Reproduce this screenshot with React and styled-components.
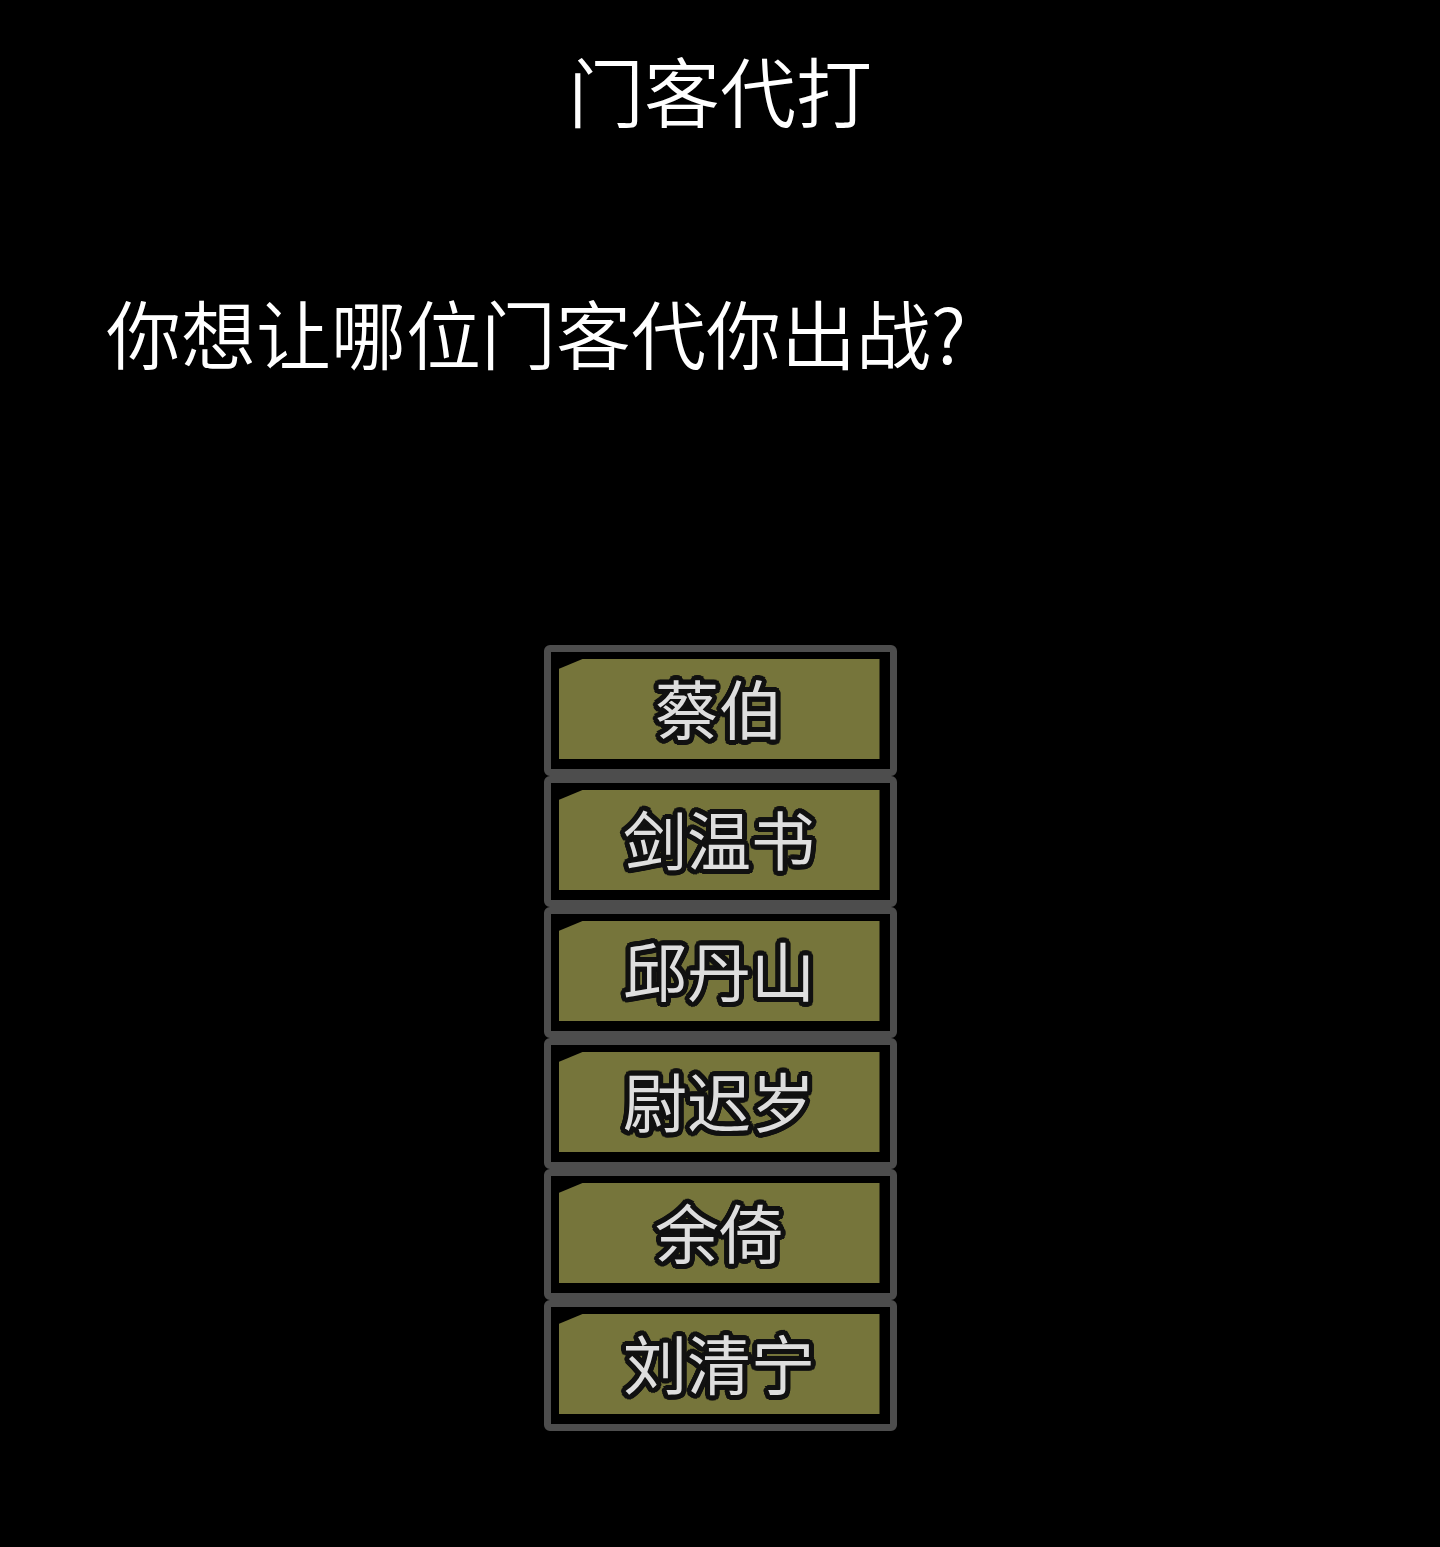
import styled, { createGlobalStyle } from "styled-components";

const retainers = ["蔡伯", "剑温书", "邱丹山", "尉迟岁", "余倚", "刘清宁"];

// ring of shadows gives the names their thick dark outline
const outline = (r, color) => {
  const out = [];
  for (let i = 0; i < 24; i++) {
    const a = (i / 24) * Math.PI * 2;
    out.push(`${(Math.cos(a) * r).toFixed(2)}px ${(Math.sin(a) * r).toFixed(2)}px 0 ${color}`);
  }
  return out.join(", ");
};

const GlobalStyle = createGlobalStyle`
  html, body {
    margin: 0;
    padding: 0;
    background: #000;
  }
  body {
    font-family: "Noto Sans CJK SC", "Noto Sans", sans-serif;
  }
`;

export default function App() {
  return (
    <Screen>
      <GlobalStyle />
      <Title>门客代打</Title>
      <Question>你想让哪位门客代你出战?</Question>
      <Menu>
        {retainers.map((name) => (
          <Choice key={name}>
            <Plate>
              <Name>{name}</Name>
            </Plate>
          </Choice>
        ))}
      </Menu>
    </Screen>
  );
}

const Screen = styled.div`
  width: 1440px;
  min-height: 1547px;
  background: #000;
  display: flex;
  flex-direction: column;
  padding-top: 51px;
  box-sizing: border-box;
  color: #fff;
`;

const Title = styled.h1`
  margin: 0;
  font-size: 76px;
  line-height: 1;
  font-weight: 350;
  text-align: center;
  color: #fff;
`;

const Question = styled.p`
  margin: 167px 0 0;
  padding-left: 106px;
  font-size: 75px;
  line-height: 1;
  font-weight: 350;
  color: #fff;
`;

const Menu = styled.div`
  margin-top: 276px;
  align-self: center;
  display: flex;
  flex-direction: column;
  width: 353px;
`;

const Choice = styled.div`
  height: 131px;
  box-sizing: border-box;
  border: 7px solid #4d4d4d;
  border-radius: 6px;
  background: #000;
  padding: 7px 10px 10px 8px;
  display: flex;
  cursor: pointer;
`;

const Plate = styled.div`
  flex: 1;
  background: #76753b;
  clip-path: polygon(24px 0, 100% 0, 100% 100%, 0 100%, 0 10px);
  display: flex;
  align-items: center;
  justify-content: center;
  padding-bottom: 6px;
`;

const Name = styled.span`
  font-size: 64px;
  line-height: 1;
  font-weight: 400;
  color: #dedede;
  text-shadow: ${outline(5, "#111")}, ${outline(3, "#111")};
`;
